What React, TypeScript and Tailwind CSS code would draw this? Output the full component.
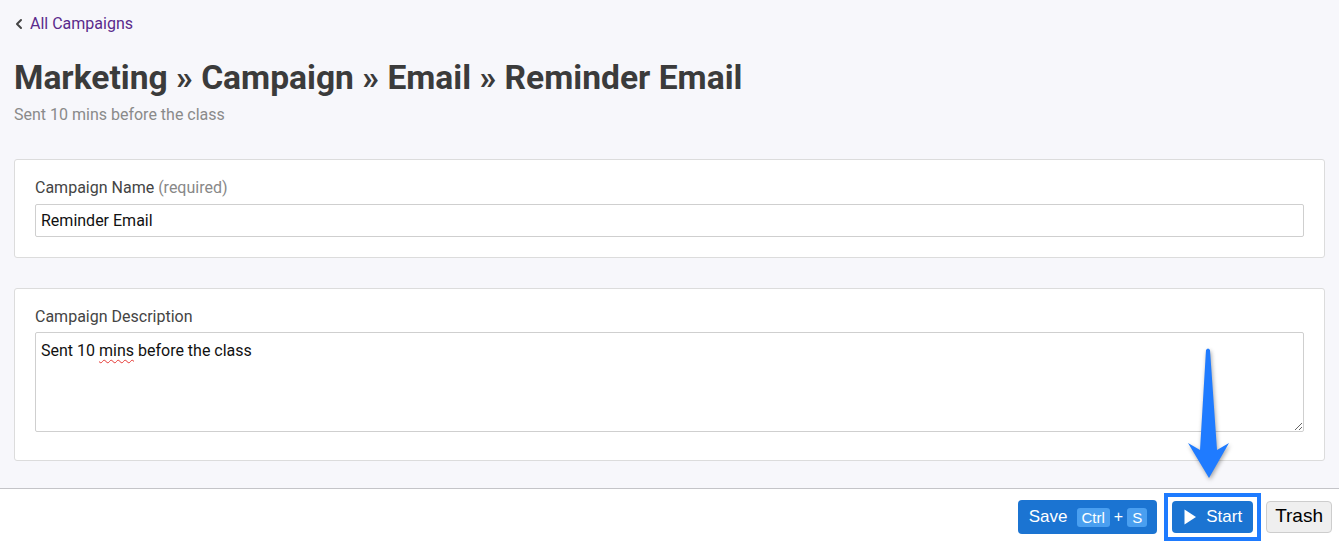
import { ChevronLeft } from "lucide-react";

function Kbd({ children }: { children: React.ReactNode }) {
  return (
    <span className="inline-flex items-center h-[19px] px-[5px] rounded-[3px] bg-[#4a9ff0] text-[15px] leading-none text-white">
      {children}
    </span>
  );
}

export default function App() {
  return (
    <div className="relative h-[544px] flex flex-col font-['Roboto',sans-serif] text-[#333]">
      <main className="flex-1 bg-[#f7f7fb] px-[14px] border-b border-[#c4c4c8]">
        <a href="#" className="flex items-center gap-[3px] pt-[14px] h-[34px] text-[16px] text-[#5a2a8c]">
          <ChevronLeft size={16} strokeWidth={3} className="text-[#444] -ml-[3px]" />
          All Campaigns
        </a>

        <h1 className="mt-[24px] text-[33.6px] leading-[40px] font-bold text-[#3b3b3b]">
          Marketing » Campaign » Email » Reminder Email
        </h1>
        <p className="mt-[7px] text-[16px] leading-[20px] text-[#8a8a8a]">
          Sent 10 mins before the class
        </p>

        <section className="mt-[34px] bg-white border border-[#dcdcdc] rounded-[3px] px-[20px] pt-[18px] pb-[20px]">
          <label className="block text-[16px] leading-[20px] text-[#444] mb-[6px]">
            Campaign Name <span className="text-[#888]">(required)</span>
          </label>
          <input
            defaultValue="Reminder Email"
            className="block w-full h-[33px] px-[5px] border border-[#cfcfcf] rounded-[2px] text-[16px] text-[#111] outline-none"
          />
        </section>

        <section className="mt-[30px] bg-white border border-[#dcdcdc] rounded-[3px] px-[20px] pt-[18px] pb-[28px]">
          <label className="block text-[16px] leading-[20px] text-[#444] mb-[5px]">
            Campaign Description
          </label>
          <div className="h-[100px] px-[5px] pt-[8px] border border-[#cfcfcf] rounded-[2px] text-[16px] leading-[20px] text-[#111] resize-y overflow-auto">
            Sent 10{" "}
            <span className="underline decoration-wavy decoration-[#e53935] decoration-1 underline-offset-[3px]">
              mins
            </span>{" "}
            before the class
          </div>
        </section>
      </main>

      <footer className="h-[55px] bg-white flex items-center justify-end pr-[7px] font-['Liberation_Sans',Arial,sans-serif]">
        <button className="flex items-center h-[34px] mt-[1px] pl-[11px] pr-[10px] rounded-[4px] bg-[#1b74d2] text-white text-[17px]">
          <span className="mr-[9px]">Save</span>
          <Kbd>Ctrl</Kbd>
          <span className="mx-[4px] text-[16px]">+</span>
          <Kbd>S</Kbd>
        </button>

        <span className="ml-[7px] p-[4px] border-4 border-[#1e7bff] bg-white">
          <button className="flex items-center h-[32px] pl-[12px] pr-[11px] rounded-[4px] bg-[#1b74d2] text-white text-[17px]">
            <svg width="12" height="16" viewBox="0 0 12 16" className="mr-[10px]">
              <path d="M0.5 0.5 L12 8 L0.5 15.5 Z" fill="white" />
            </svg>
            Start
          </button>
        </span>

        <button className="ml-[5px] h-[32px] px-[8px] rounded-[4px] bg-[#efefef] border border-[#cdcdcd] text-black text-[19px]">
          Trash
        </button>
      </footer>

      <svg
        width="60"
        height="145"
        viewBox="0 0 60 145"
        className="absolute left-[1179px] top-[340px] drop-shadow-[1px_2px_2px_rgba(0,0,0,0.35)]"
      >
        <path
          d="M27 10 Q29 7 31 10 L38 110 L50 103 L30 138 L9 103 L21 110 Z"
          fill="#1f7bff"
        />
      </svg>
    </div>
  );
}
